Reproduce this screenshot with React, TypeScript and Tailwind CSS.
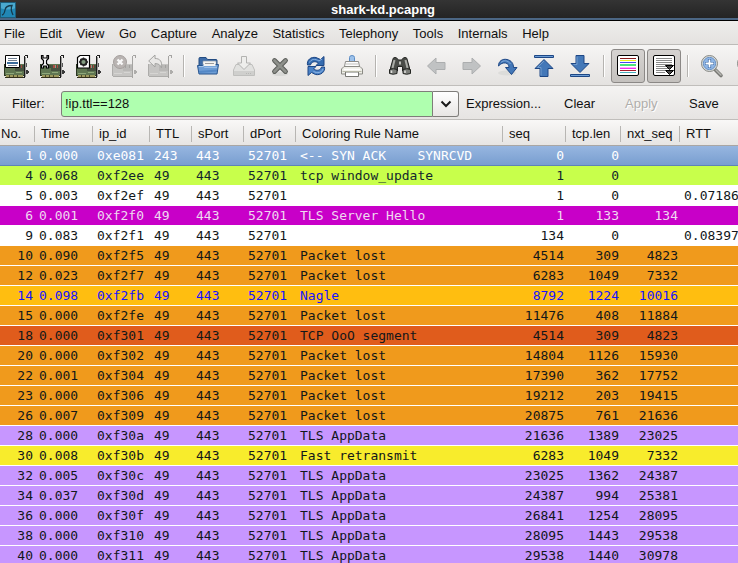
import type { ReactNode } from "react";

const SANS = "font-['Liberation_Sans',Arial,sans-serif]";
const MONO = "font-['DejaVu_Sans_Mono',monospace]";

function Icon({ children }: { children: ReactNode }) {
  return (
    <svg viewBox="0 0 24 24" className="size-6 shrink-0 overflow-visible" aria-hidden="true">
      {children}
    </svg>
  );
}

function Card() {
  return (
    <>
      <rect x="1" y="10" width="19" height="11" fill="#5f7652" />
      <path d="M0 10h1v12H0zM1 21h19v1H1z" fill="#2c3823" />
      <path d="M2 19h8v1H2zM12 18h6v1h-6z" fill="#8fa87a" />
      <path d="M2 21h17v2H2z" fill="#9c9a5e" />
      <path d="M1 23h19v1H1z" fill="#33301c" />
      <path d="M5 21h1v2H5zM9 21h1v2H9zM13 21h1v2h-1z" fill="#4b4a2c" />
      <path d="M11 11h9v6h-9z" fill="#465240" />
      <path d="M13 11h2v3h-2zM17 11h1v3h-1z" fill="#a84a40" />
      <path d="M15 11h1v3h-1z" fill="#8c9a86" />
      <path d="M20 2h1v22h-1z" fill="#1c1c1c" />
      <path d="M21 1h3v1h-3zM23 2h1v2h-1z" fill="#1c1c1c" />
      <path d="M21 3h1v20h-1z" fill="#9a9a98" />
      <path d="M22 16h2v1h1v2h-1v1h-2z" fill="#3a3a3a" />
      <path d="M22 9h1v4h-1z" fill="#555" />
    </>
  );
}

function FadedCard() {
  return (
    <>
      <rect x="1" y="10" width="19" height="12" fill="#c6c5c3" />
      <path d="M0 10h1v12H0zM1 22h19v1H1z" fill="#adacaa" />
      <path d="M2 19h8v1H2zM12 18h6v1h-6z" fill="#d6d5d3" />
      <path d="M11 11h9v6h-9z" fill="#b9b8b6" />
      <path d="M13 11h1v3h-1zM17 11h1v3h-1z" fill="#a3a2a0" />
      <path d="M20 2h1v22h-1zM21 1h3v1h-3zM23 2h1v2h-1z" fill="#a5a4a2" />
      <path d="M22 16h2v1h1v2h-1v1h-2z" fill="#aeadab" />
    </>
  );
}

const icons = {
  interfaces: (
    <Icon>
      <Card />
      <rect x="1" y="1" width="15" height="13" rx="1" fill="#000" />
      <path d="M2 2h13v11H2z" fill="#fff" />
      <path d="M4 4h9v1H4zM4 6h9v1H4z" fill="#6f7f90" />
      <path d="M3 8h11v2H3z" fill="#3a6c9c" />
      <path d="M4 11h9v1H4z" fill="#6f7f90" />
    </Icon>
  ),
  options: (
    <Icon>
      <Card />
      <path
        d="M1.500 1.500v3l2 2v3l-2 2V14h2v-2h3v2h2v-2.500l-2-2v-3l2-2v-3H7V4H3V1.500z"
        fill="#fff"
        stroke="#000"
        strokeWidth="1.200"
      />
      <path d="M10 11v3" stroke="#222" />
    </Icon>
  ),
  start: (
    <Icon>
      <Card />
      <path d="M1.500 3.500 4 1.500h9.500v12.500h-12z" fill="#fff" stroke="#000" strokeWidth="1.200" />
      <circle cx="7.500" cy="8" r="3" fill="#849c82" stroke="#222" strokeWidth="1.800" />
      <path d="M7.500 3.500v1M7.500 11.500v1M3 8h1M11 8h1M4.500 5l1 1M9.500 10l1 1M10.500 5l-1 1M4.500 11l1-1" stroke="#222" strokeWidth="1.400" />
    </Icon>
  ),
  stop: (
    <Icon>
      <FadedCard />
      <circle cx="8" cy="8" r="6.500" fill="#b9b4b2" stroke="#a5a09e" />
      <path d="m5.500 5.500 5 5m0-5-5 5" stroke="#f8f8f8" strokeWidth="2.400" />
    </Icon>
  ),
  restart: (
    <Icon>
      <FadedCard />
      <path
        d="M.7 7 7 1v3.500c5 0 7.500 3 6.500 9.500-1-3-3-4.500-6.500-4.500V13z"
        fill="#e9e8e6"
        stroke="#a4a4a2"
      />
    </Icon>
  ),
  open: (
    <Icon>
      <path d="M3 13V4.500Q3 3.500 4 3.500h6l1.500 2H20q1 0 1 1V13z" fill="#3d6ca8" stroke="#234b80" />
      <path d="M7 7h13v8H7z" fill="#f4f4f2" stroke="#8e9aa8" strokeWidth=".7" />
      <path d="M9 9.500h9" stroke="#9b9b9b" />
      <path d="M1.500 11.500h5l1.500-1h14.500l-1.500 9.500h-18z" fill="#6d9dd5" stroke="#28558e" />
      <path d="M7.500 8h12v4h-12z" fill="#f4f4f2" />
      <path d="M9 9.500h9" stroke="#9b9b9b" />
      <path d="M3 12.500h4.500l1 .8h12.500" stroke="#a6c6ea" fill="none" />
      <path d="m3 18 18-1.500" stroke="#5488c6" strokeWidth="2" />
    </Icon>
  ),
  save: (
    <Icon>
      <path d="M4 10.500h16l2.500 5.500v5.500h-21V16z" fill="#e1e1df" stroke="#bfbfbd" />
      <path d="M2 17h20v4H2z" fill="#cfcfcd" />
      <path d="M9.500 2.500h5V9h4L12 15.500 5.500 9h4z" fill="#eeeeec" stroke="#b3b3b1" />
      <path d="M14 19.500h6" stroke="#b7b7b5" strokeDasharray="1 1" />
    </Icon>
  ),
  close: (
    <Icon>
      <ellipse cx="12" cy="20" rx="8" ry="2" fill="#d8d8d6" />
      <path d="m6.500 6.500 11 11m0-11-11 11" stroke="#5c5e5a" strokeWidth="4.800" strokeLinecap="round" />
      <path d="m6.500 6.500 11 11m0-11-11 11" stroke="#8e908b" strokeWidth="2.800" strokeLinecap="round" />
    </Icon>
  ),
  reload: (
    <Icon>
      <path d="M3.500 11C2.500 6 7 2.500 12 3.500l4.500 2 3.500-3v9h-8L14.500 9C11 6.500 7 8 6.500 11z" fill="#356cb0" stroke="#1e4785" />
      <path d="M20.500 13c1 5-4 8.500-9 7.500l-4-2L4 21.500v-9h8L9.500 15c3.500 2.500 7.500 1 8-2z" fill="#4a82c6" stroke="#1e4785" />
      <path d="M5.500 8.500C7 5 11 4.500 15 7l3-2" fill="none" stroke="#8fb5e4" />
      <path d="M19 15c-1.500 4-5.500 4.500-9.500 2.500" fill="none" stroke="#8fb5e4" />
    </Icon>
  ),
  print: (
    <Icon>
      <path d="M9.500 9V3.500q0-2 2.500-2t2.500 2V9z" fill="#9cc1ea" stroke="#5d8dc4" />
      <path d="M5.500 7.500h13l1 5h-15z" fill="#fdfdfd" stroke="#8b8b88" />
      <path d="M6 10h12" stroke="#c1c1be" />
      <path d="M4 12.500h16l2.500 2.500v5h-21v-5z" fill="#eeeee8" stroke="#8a8a85" />
      <path d="M4 15.500h16" stroke="#fff" strokeWidth="1.500" />
      <path d="M5.500 18h13v4.500h-13z" fill="#fff" stroke="#777773" />
      <path d="M2.500 17.500h19" stroke="#b8b8a8" />
    </Icon>
  ),
  find: (
    <Icon>
      <path d="M5 5q0-1.500 2-1.500T9.500 5l1 1h3l1-1q.5-1.500 2.500-1.500T19 5l2.500 9v3h-7v-4.500h-5V17h-7v-3z" fill="#4a4c48" stroke="#232522" />
      <path d="M1.500 15.500q4-1.500 7.500 0v4q-4 1.500-7.500 0zM15 15.500q4-1.500 7.500 0v4q-4 1.500-7.500 0z" fill="#7c7e7a" stroke="#232522" />
      <path d="M6.500 6 4.500 14M17.500 6l2 8" stroke="#a9aba6" strokeWidth="2" />
      <path d="M11 7.500h2v3h-2z" fill="#b9bbb6" />
      <path d="M3.500 16.500v2.500M17 16.500v2.500" stroke="#e0e0dd" strokeWidth="1.500" />
    </Icon>
  ),
  back: (
    <Icon>
      <path d="m3.500 12 8.500-8v4.500h9v7h-9V20z" fill="#c0c2c3" stroke="#acaeaf" />
    </Icon>
  ),
  forward: (
    <Icon>
      <path d="m20.500 12-8.500-8v4.500H3v7h9V20z" fill="#c0c2c3" stroke="#acaeaf" />
    </Icon>
  ),
  jump: (
    <Icon>
      <ellipse cx="11" cy="19" rx="9" ry="2.500" fill="#dcdcda" />
      <path d="M2.500 12C2.500 7 6.500 4.500 11 5.500c4.500 1 6.500 4 6.500 8h3.500L15.500 20.500 9.500 13.500h3.500c0-2.500-1-4-3.500-4.500S5 9.500 2.500 12z" fill="#4478b8" stroke="#1e4785" />
      <path d="M5 8.500C7 6 12 6 14.500 10" fill="none" stroke="#84abda" />
    </Icon>
  ),
  top: (
    <Icon>
      <path d="M2.500 1.500h19v2h-19z" fill="#6d9dd5" stroke="#1e4785" />
      <path d="m12 5.500 9 9h-5v8H8v-8H3z" fill="#4478b8" stroke="#1e4785" />
      <path d="m12 7-6.500 6.500H9v8" fill="none" stroke="#729dce" />
    </Icon>
  ),
  bottom: (
    <Icon>
      <path d="M2.500 20.500h19v2h-19z" fill="#6d9dd5" stroke="#1e4785" />
      <path d="m12 18.500-9-9h5v-8h8v8h5z" fill="#4478b8" stroke="#1e4785" />
      <path d="M9 2.500v8H5.500" fill="none" stroke="#729dce" />
    </Icon>
  ),
  colorize: (
    <Icon>
      <rect x="1.500" y="1.500" width="21" height="20" rx="1.500" fill="#fff" stroke="#000" />
      <path d="M4 4h16v1H4z" fill="#8c1c1c" />
      <path d="M4 6h16v1H4z" fill="#f0f020" />
      <path d="M4 8h16v1H4z" fill="#4848f0" />
      <path d="M4 10h16v2H4z" fill="#4be37b" />
      <path d="M4 14h16v1H4z" fill="#f030f0" />
      <path d="M4 13h16v1H4z" fill="#fbb0fb" />
      <path d="M4 16h16v1H4z" fill="#a01c2c" />
      <path d="M4 18h16v1H4z" fill="#48aebc" />
    </Icon>
  ),
  autoscroll: (
    <Icon>
      <rect x="1.500" y="1.500" width="21" height="20" rx="1.500" fill="#fff" stroke="#000" />
      <path d="M4 4.500h16M4 6.500h16M4 8.500h16M4 10.500h16M4 12.500h11M4 14.500h12M4 16.500h9M4 18.500h9" stroke="#8a8a8a" />
      <path d="M13.500 11.500h8l-4 4zM13.500 16.500h8l-4 4z" fill="#444" stroke="#000" />
    </Icon>
  ),
  zoomIn: (
    <Icon>
      <path d="m15.500 16 5.500 5.500" stroke="#777773" strokeWidth="3.600" strokeLinecap="round" />
      <path d="m16 16 5 5" stroke="#b5b5b1" strokeWidth="1.500" strokeLinecap="round" />
      <circle cx="9.500" cy="9.500" r="8" fill="#dcdedc" stroke="#858783" />
      <circle cx="9.500" cy="9.500" r="6.200" fill="#8fb6e6" stroke="#6c93c5" />
      <path d="M9.500 5v9M5 9.500h9" stroke="#3465a4" strokeWidth="3.200" />
      <path d="M9.500 5.500v8M5.500 9.500h8" stroke="#fff" strokeWidth="1.800" />
    </Icon>
  ),
  zoomOut: (
    <Icon>
      <path d="m15.500 16 5.500 5.500" stroke="#777773" strokeWidth="3.600" strokeLinecap="round" />
      <circle cx="9.500" cy="9.500" r="8" fill="#dcdedc" stroke="#858783" />
      <circle cx="9.500" cy="9.500" r="6.200" fill="#84ade0" stroke="#6c93c5" />
      <path d="M5.500 9.500h8" stroke="#fff" strokeWidth="1.800" />
    </Icon>
  ),
};

type Tool = { label: string; icon: keyof typeof icons; pressed?: boolean; disabled?: boolean };

const toolGroups: Tool[][] = [
  [
    { label: "List interfaces", icon: "interfaces" },
    { label: "Capture options", icon: "options" },
    { label: "Start capture", icon: "start" },
    { label: "Stop capture", icon: "stop", disabled: true },
    { label: "Restart capture", icon: "restart", disabled: true },
  ],
  [
    { label: "Open", icon: "open" },
    { label: "Save file", icon: "save", disabled: true },
    { label: "Close", icon: "close" },
    { label: "Reload", icon: "reload" },
    { label: "Print", icon: "print" },
  ],
  [
    { label: "Find packet", icon: "find" },
    { label: "Go back", icon: "back", disabled: true },
    { label: "Go forward", icon: "forward", disabled: true },
    { label: "Go to packet", icon: "jump" },
    { label: "First packet", icon: "top" },
    { label: "Last packet", icon: "bottom" },
  ],
  [
    { label: "Colorize", icon: "colorize", pressed: true },
    { label: "Auto scroll", icon: "autoscroll", pressed: true },
  ],
  [
    { label: "Zoom in", icon: "zoomIn" },
    { label: "Zoom out", icon: "zoomOut" },
  ],
];

const menus = ["File", "Edit", "View", "Go", "Capture", "Analyze", "Statistics", "Telephony", "Tools", "Internals", "Help"];

const columns = [
  { name: "No.", width: "w-[35px]" },
  { name: "Time", width: "w-[58px]" },
  { name: "ip_id", width: "w-[57px]" },
  { name: "TTL", width: "w-[42px]" },
  { name: "sPort", width: "w-[52px]" },
  { name: "dPort", width: "w-[52px]" },
  { name: "Coloring Rule Name", width: "w-[207px]" },
  { name: "seq", width: "w-[63px]" },
  { name: "tcp.len", width: "w-[55px]" },
  { name: "nxt_seq", width: "w-[59px]" },
  { name: "RTT", width: "" },
];

const numeric = new Set([0, 7, 8, 9]);

const tones = {
  selected: "bg-linear-to-b from-[#97b6e0] to-[#779dcf] text-white",
  update: "bg-[#c8ff4b] text-[#12272e]",
  plain: "bg-white text-[#12171a]",
  hello: "bg-[#c800c8] text-[#f0d8f0]",
  lost: "bg-[#f09a1c] text-[#12171a]",
  nagle: "bg-[#ffbe10] text-[#1414ff]",
  order: "bg-[#e05c1c] text-[#12171a]",
  data: "bg-[#c796ff] text-[#12171a]",
  retransmit: "bg-[#f8ec2c] text-[#12171a]",
};

type Packet = [tone: keyof typeof tones, no: string, time: string, id: string, ttl: string, rule: string, seq: string, len: string, next: string, rtt: string];

const packets: Packet[] = [
  ["selected", "1", "0.000", "0xe081", "243", "<-- SYN ACK    SYNRCVD", "0", "0", "", ""],
  ["update", "4", "0.068", "0xf2ee", "49", "tcp window_update", "1", "0", "", ""],
  ["plain", "5", "0.003", "0xf2ef", "49", "", "1", "0", "", "0.07186"],
  ["hello", "6", "0.001", "0xf2f0", "49", "TLS Server Hello", "1", "133", "134", ""],
  ["plain", "9", "0.083", "0xf2f1", "49", "", "134", "0", "", "0.08397"],
  ["lost", "10", "0.090", "0xf2f5", "49", "Packet lost", "4514", "309", "4823", ""],
  ["lost", "12", "0.023", "0xf2f7", "49", "Packet lost", "6283", "1049", "7332", ""],
  ["nagle", "14", "0.098", "0xf2fb", "49", "Nagle", "8792", "1224", "10016", ""],
  ["lost", "15", "0.000", "0xf2fe", "49", "Packet lost", "11476", "408", "11884", ""],
  ["order", "18", "0.000", "0xf301", "49", "TCP OoO segment", "4514", "309", "4823", ""],
  ["lost", "20", "0.000", "0xf302", "49", "Packet lost", "14804", "1126", "15930", ""],
  ["lost", "22", "0.001", "0xf304", "49", "Packet lost", "17390", "362", "17752", ""],
  ["lost", "23", "0.000", "0xf306", "49", "Packet lost", "19212", "203", "19415", ""],
  ["lost", "26", "0.007", "0xf309", "49", "Packet lost", "20875", "761", "21636", ""],
  ["data", "28", "0.000", "0xf30a", "49", "TLS AppData", "21636", "1389", "23025", ""],
  ["retransmit", "30", "0.008", "0xf30b", "49", "Fast retransmit", "6283", "1049", "7332", ""],
  ["data", "32", "0.005", "0xf30c", "49", "TLS AppData", "23025", "1362", "24387", ""],
  ["data", "34", "0.037", "0xf30d", "49", "TLS AppData", "24387", "994", "25381", ""],
  ["data", "36", "0.000", "0xf30f", "49", "TLS AppData", "26841", "1254", "28095", ""],
  ["data", "38", "0.000", "0xf310", "49", "TLS AppData", "28095", "1443", "29538", ""],
  ["data", "40", "0.000", "0xf311", "49", "TLS AppData", "29538", "1440", "30978", ""],
];

function TitleBar() {
  return (
    <header className="flex h-[21px] shrink-0 items-center border-b border-black bg-linear-to-b from-[#343434] to-[#222222] shadow-[inset_0_-2px_0_#4b6684]">
      <svg viewBox="0 0 16 16" className="size-4 shrink-0" aria-hidden="true">
        <rect width="16" height="16" fill="#2187b5" />
        <path d="M0 0h16v6Q8 9 0 6z" fill="#4aa9cf" />
        <path d="M2 13c2-.5 2.500-2 3-5 .5-3 3-4.500 7-4.500-1 2-.8 6 1 9.500" fill="none" stroke="#153a4c" strokeWidth="1.300" />
        <rect x=".5" y=".5" width="15" height="15" fill="none" stroke="#1d5d7a" />
      </svg>
      <h1 className="flex-1 pl-3 text-center text-[13px] leading-[18px] font-bold text-white">shark-kd.pcapng</h1>
    </header>
  );
}

function MenuBar() {
  return (
    <nav className="flex h-6 shrink-0 items-center border-b border-[#bdbbb8] bg-linear-to-b from-[#eeedeb] to-[#e4e2e0] px-1 pt-0.5">
      <div className="flex w-full max-w-[545px] justify-between">
        {menus.map((menu) => (
          <button key={menu} type="button" className="whitespace-nowrap">
            {menu}
          </button>
        ))}
      </div>
    </nav>
  );
}

function ToolBar() {
  return (
    <div role="toolbar" aria-label="Main" className="-ml-0.5 flex h-[41px] shrink-0 items-center overflow-hidden border-b border-[#c0bebb] bg-linear-to-b from-[#f6f5f4] to-[#e4e2e0] pt-0.5">
      {toolGroups.map((group, index) => (
        <div key={group[0].label} className="flex shrink-0 items-center">
          {index > 0 && (
            <div className="flex w-3 justify-center">
              <div className="h-[22px] w-0.5 border-r border-l border-r-white border-l-[#b5b3b0]" />
            </div>
          )}
          {group.map((tool) => (
            <button
              key={tool.label}
              type="button"
              aria-label={tool.label}
              aria-pressed={tool.pressed}
              disabled={tool.disabled}
              className={`mx-px flex size-[34px] items-center justify-center rounded-[3px] ${
                tool.pressed ? "border border-[#8b8886] bg-linear-to-b from-[#d6d3d1] to-[#c4c1be]" : ""
              }`}
            >
              {icons[tool.icon]}
            </button>
          ))}
        </div>
      ))}
    </div>
  );
}

function FilterBar() {
  return (
    <form
      className="flex h-[34px] shrink-0 items-center overflow-hidden border-b border-[#c0bebb] bg-linear-to-b from-[#f4f3f2] to-[#e6e4e2] pt-0.5 pl-3 whitespace-nowrap"
      onSubmit={(e) => e.preventDefault()}
    >
      <label htmlFor="filter" className="w-[49px] shrink-0">
        Filter:
      </label>
      <input
        id="filter"
        type="text"
        defaultValue="!ip.ttl==128"
        className="h-[26px] min-w-0 flex-1 rounded-l-[3px] border border-[#7f7d7a] bg-[#afffaf] px-[3px] outline-none"
      />
      <button
        type="button"
        aria-label="Filter history"
        className="flex h-[26px] w-[26px] items-center justify-center rounded-r-[3px] border border-l-0 border-[#7f7d7a] bg-linear-to-b from-white to-[#e8e6e4]"
      >
        <svg viewBox="0 0 12 8" className="h-2 w-3" aria-hidden="true">
          <path d="m1.500 1.500 4.500 4.500 4.500-4.500" fill="none" stroke="#1a1a1a" strokeWidth="2" />
        </svg>
      </button>
      <button type="button" className="ml-[7px] w-[98px] text-left">
        Expression...
      </button>
      <button type="button" className="w-[61px] text-left">
        Clear
      </button>
      <button type="submit" disabled className="w-16 text-left text-[#b0aeab] [text-shadow:1px_1px_0_#fff]">
        Apply
      </button>
      <button type="button" className="w-[49px] text-left">
        Save
      </button>
    </form>
  );
}

function PacketList() {
  return (
    <main className="min-h-0 flex-1 overflow-hidden bg-white">
      <table className="w-full table-fixed border-separate border-spacing-0">
        <colgroup>
          {columns.map((column) => (
            <col key={column.name} className={column.width} />
          ))}
        </colgroup>
        <thead>
          <tr className="h-[26px] bg-linear-to-b from-[#f9f8f7] to-[#e6e4e2]">
            {columns.map((column, index) => (
              <th key={column.name} scope="col" className="border-b border-[#a9a6a3] p-0 pt-[3px] text-left font-normal whitespace-nowrap">
                <div className={`h-4 leading-4 ${index > 0 ? "pl-[6px]" : "pl-px"} ${index < columns.length - 1 ? "border-r border-[#b8b6b3]" : ""}`}>
                  {column.name}
                </div>
              </th>
            ))}
          </tr>
        </thead>
        <tbody className={MONO}>
          {packets.map(([tone, no, time, id, ttl, rule, seq, len, next, rtt]) => (
            <tr key={no} className={`h-5 ${tones[tone]}`}>
              {[no, time, id, ttl, "443", "52701", rule, seq, len, next, rtt].map((value, index) => (
                <td
                  key={index}
                  className={`overflow-hidden border-b p-0 leading-[19px] whitespace-pre ${tone === "selected" ? "border-[#5f84b5]" : "border-white"} ${
                    numeric.has(index) ? "pr-0.5 text-right" : "pl-1"
                  }`}
                >
                  {value}
                </td>
              ))}
            </tr>
          ))}
        </tbody>
      </table>
    </main>
  );
}

export default function App() {
  return (
    <div className={`flex h-screen flex-col overflow-hidden bg-[#edebe9] text-[13px] leading-4 text-[#101010] ${SANS}`}>
      <TitleBar />
      <MenuBar />
      <ToolBar />
      <FilterBar />
      <PacketList />
    </div>
  );
}
